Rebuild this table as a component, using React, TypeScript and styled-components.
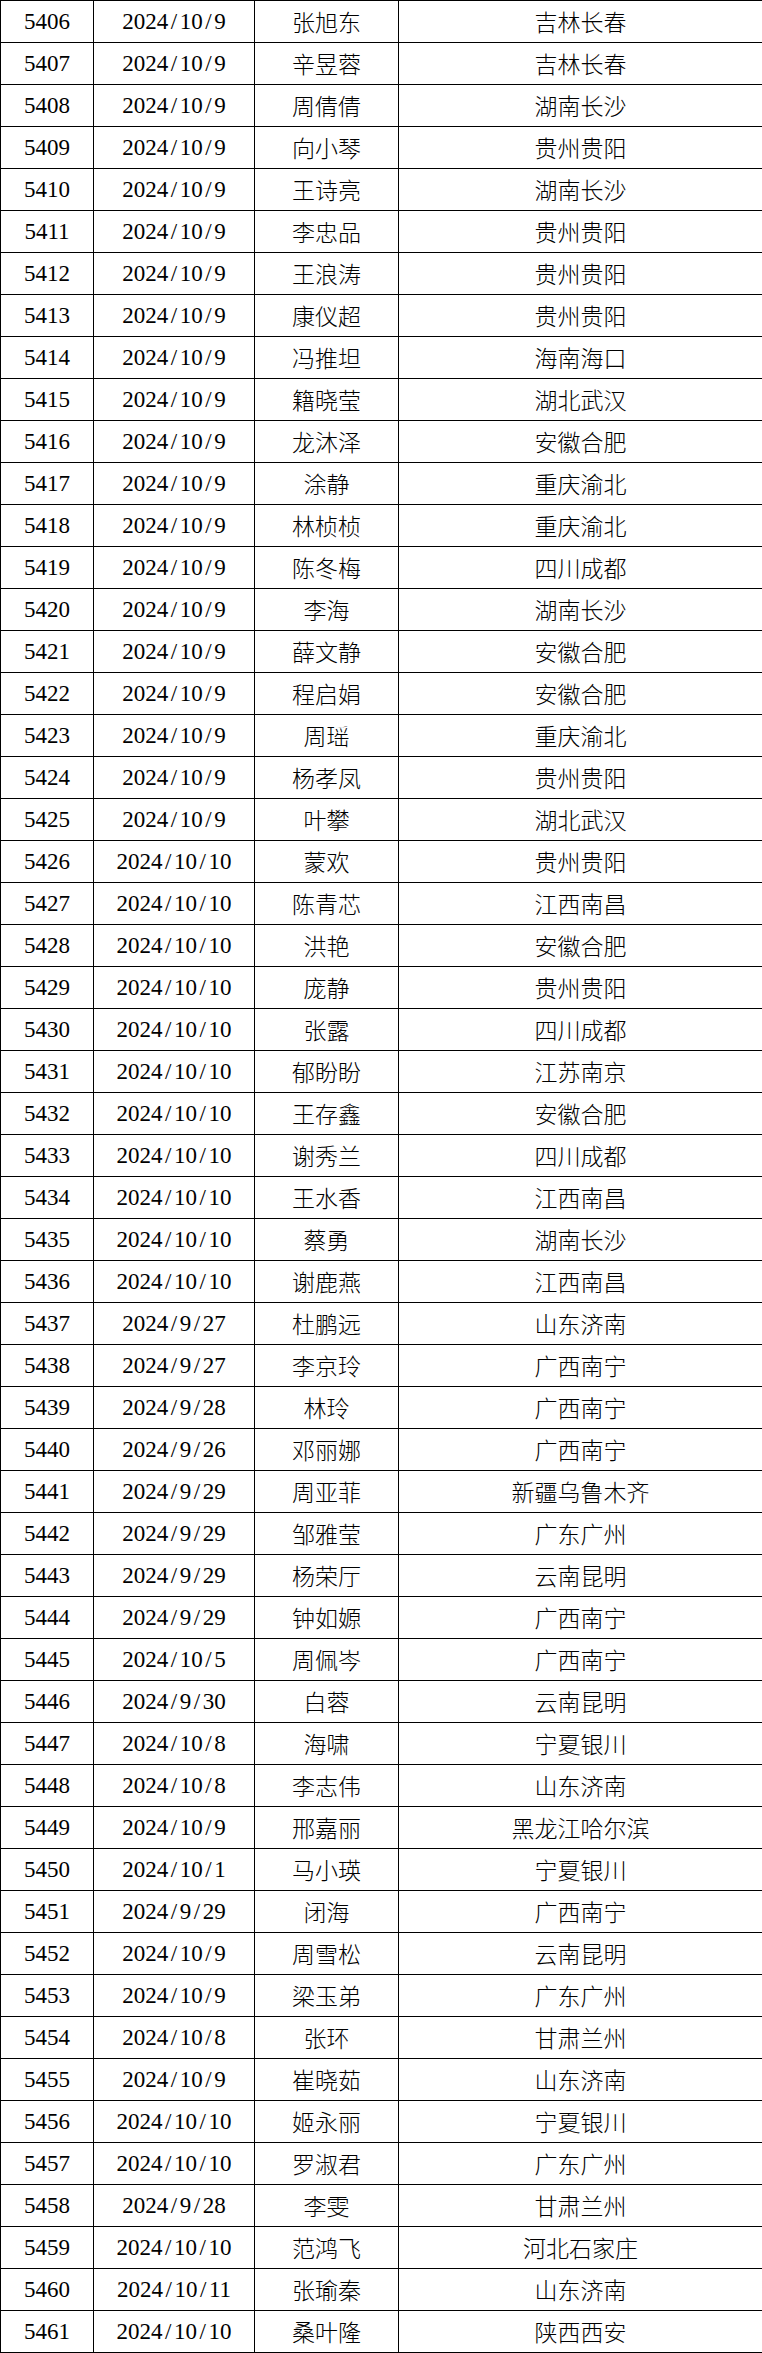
import React from 'react';
import styled, { createGlobalStyle } from 'styled-components';

const GlobalStyle = createGlobalStyle`
  html, body {
    margin: 0;
    padding: 0;
    background: #ffffff;
  }
`;

interface Record {
  id: number;
  date: string;
  name: string;
  place: string;
}

const raw = `5406 2024/10/9 张旭东 吉林长春
5407 2024/10/9 辛昱蓉 吉林长春
5408 2024/10/9 周倩倩 湖南长沙
5409 2024/10/9 向小琴 贵州贵阳
5410 2024/10/9 王诗亮 湖南长沙
5411 2024/10/9 李忠品 贵州贵阳
5412 2024/10/9 王浪涛 贵州贵阳
5413 2024/10/9 康仪超 贵州贵阳
5414 2024/10/9 冯推坦 海南海口
5415 2024/10/9 籍晓莹 湖北武汉
5416 2024/10/9 龙沐泽 安徽合肥
5417 2024/10/9 涂静 重庆渝北
5418 2024/10/9 林桢桢 重庆渝北
5419 2024/10/9 陈冬梅 四川成都
5420 2024/10/9 李海 湖南长沙
5421 2024/10/9 薛文静 安徽合肥
5422 2024/10/9 程启娟 安徽合肥
5423 2024/10/9 周瑶 重庆渝北
5424 2024/10/9 杨孝凤 贵州贵阳
5425 2024/10/9 叶攀 湖北武汉
5426 2024/10/10 蒙欢 贵州贵阳
5427 2024/10/10 陈青芯 江西南昌
5428 2024/10/10 洪艳 安徽合肥
5429 2024/10/10 庞静 贵州贵阳
5430 2024/10/10 张露 四川成都
5431 2024/10/10 郁盼盼 江苏南京
5432 2024/10/10 王存鑫 安徽合肥
5433 2024/10/10 谢秀兰 四川成都
5434 2024/10/10 王水香 江西南昌
5435 2024/10/10 蔡勇 湖南长沙
5436 2024/10/10 谢鹿燕 江西南昌
5437 2024/9/27 杜鹏远 山东济南
5438 2024/9/27 李京玲 广西南宁
5439 2024/9/28 林玲 广西南宁
5440 2024/9/26 邓丽娜 广西南宁
5441 2024/9/29 周亚菲 新疆乌鲁木齐
5442 2024/9/29 邹雅莹 广东广州
5443 2024/9/29 杨荣厅 云南昆明
5444 2024/9/29 钟如嫄 广西南宁
5445 2024/10/5 周佩岑 广西南宁
5446 2024/9/30 白蓉 云南昆明
5447 2024/10/8 海啸 宁夏银川
5448 2024/10/8 李志伟 山东济南
5449 2024/10/9 邢嘉丽 黑龙江哈尔滨
5450 2024/10/1 马小瑛 宁夏银川
5451 2024/9/29 闭海 广西南宁
5452 2024/10/9 周雪松 云南昆明
5453 2024/10/9 梁玉弟 广东广州
5454 2024/10/8 张环 甘肃兰州
5455 2024/10/9 崔晓茹 山东济南
5456 2024/10/10 姬永丽 宁夏银川
5457 2024/10/10 罗淑君 广东广州
5458 2024/9/28 李雯 甘肃兰州
5459 2024/10/10 范鸿飞 河北石家庄
5460 2024/10/11 张瑜秦 山东济南
5461 2024/10/10 桑叶隆 陕西西安`;

const records: Record[] = raw.split('\n').map((line) => {
  const [id, date, name, place] = line.trim().split(' ');
  return { id: Number(id), date, name, place };
});

// rows where the sheet lost the right edge border
const faintEdge = new Set([5427, 5434, 5436]);

const columnWidths = [93, 161, 144, 364];

const Sheet = styled.table`
  width: 762px;
  border-collapse: collapse;
  table-layout: fixed;
  color: #000;
`;

const Col = styled.col<{ $w: number }>`
  width: ${({ $w }) => $w}px;
`;

const Row = styled.tr`
  height: 42px;
`;

const Cell = styled.td<{ $cjk?: boolean; $faint?: boolean }>`
  border: 1px solid #000;
  border-right-color: ${({ $faint }) => ($faint ? '#e4e4e4' : '#000')};
  padding: 0;
  text-align: center;
  vertical-align: middle;
  font-family: ${({ $cjk }) =>
    $cjk
      ? '"Noto Sans CJK SC", sans-serif'
      : '"Liberation Serif", "Times New Roman", serif'};
  font-size: 23px;
  font-weight: ${({ $cjk }) => ($cjk ? 300 : 400)};
  line-height: 1;
  white-space: nowrap;
`;

// SimSun-style half-width slash
const Slash = styled.span`
  display: inline-block;
  width: 0.5em;
  text-align: center;
`;

const DateText = ({ value }: { value: string }) => (
  <>
    {value.split('/').map((p, i) => (
      <React.Fragment key={i}>
        {i > 0 && <Slash>/</Slash>}
        {p}
      </React.Fragment>
    ))}
  </>
);

export default function App() {
  return (
    <>
      <GlobalStyle />
      <Sheet>
        <colgroup>
          {columnWidths.map((w, i) => (
            <Col key={i} $w={w} />
          ))}
        </colgroup>
        <tbody>
          {records.map((r) => (
            <Row key={r.id}>
              <Cell>{r.id}</Cell>
              <Cell>
                <DateText value={r.date} />
              </Cell>
              <Cell $cjk>{r.name}</Cell>
              <Cell $cjk $faint={faintEdge.has(r.id)}>
                {r.place}
              </Cell>
            </Row>
          ))}
        </tbody>
      </Sheet>
    </>
  );
}
